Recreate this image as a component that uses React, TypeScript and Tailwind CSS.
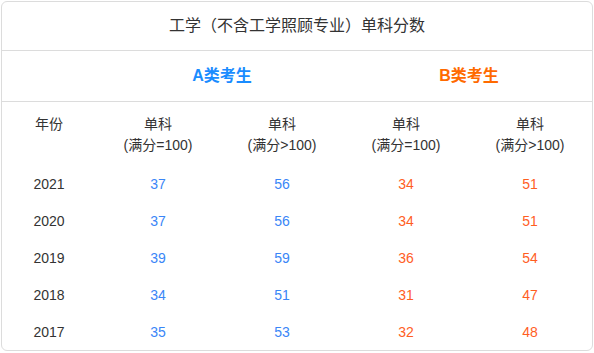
const rows = [
  { year: '2021', a1: 37, a2: 56, b1: 34, b2: 51 },
  { year: '2020', a1: 37, a2: 56, b1: 34, b2: 51 },
  { year: '2019', a1: 39, a2: 59, b1: 36, b2: 54 },
  { year: '2018', a1: 34, a2: 51, b1: 31, b2: 47 },
  { year: '2017', a1: 35, a2: 53, b1: 32, b2: 48 },
];

const heads = ['(满分=100)', '(满分>100)', '(满分=100)', '(满分>100)'];

export default function App() {
  return (
    <div
      className="w-[594px] h-[353px] bg-white p-px text-[#333]"
      style={{ fontFamily: '"Liberation Sans", "Noto Sans CJK SC", sans-serif' }}
    >
      <div className="h-[350px] w-[592px] rounded-md border border-[#dcdcdc] overflow-hidden">
        <div className="h-[49px] flex items-center justify-center text-[16px] border-b border-[#dcdcdc]">
          工学（不含工学照顾专业）单科分数
        </div>
        <div className="h-[51px] flex items-center border-b border-[#dcdcdc] text-[16px] font-bold">
          <div className="w-[96px]" />
          <div className="w-[248px] text-center text-[#1a8cff]">A类考生</div>
          <div className="flex-1 text-center text-[#ff6a00]">B类考生</div>
        </div>
        <div className="grid grid-cols-[94px_124px_124px_124px_124px] text-[14px] leading-[21px] pt-[12px] h-[64px]">
          <div className="text-center">年份</div>
          {heads.map((h, i) => (
            <div key={i} className="text-center">
              <div>单科</div>
              <div>{h}</div>
            </div>
          ))}
        </div>
        {rows.map((r) => (
          <div
            key={r.year}
            className="grid grid-cols-[94px_124px_124px_124px_124px] h-[37px] items-center text-[14px]"
          >
            <div className="text-center">{r.year}</div>
            <div className="text-center text-[#3a86f7]">{r.a1}</div>
            <div className="text-center text-[#3a86f7]">{r.a2}</div>
            <div className="text-center text-[#ff5e1f]">{r.b1}</div>
            <div className="text-center text-[#ff5e1f]">{r.b2}</div>
          </div>
        ))}
      </div>
    </div>
  );
}
